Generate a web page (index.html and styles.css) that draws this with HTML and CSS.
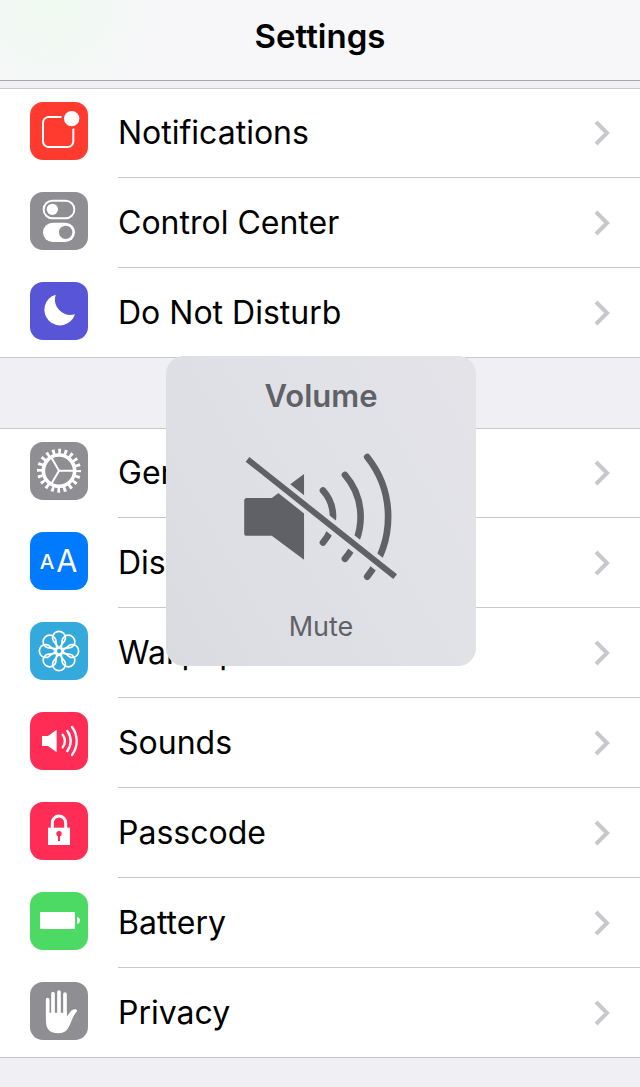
FILE: index.html
```html
<!DOCTYPE html>
<html lang="en">
    <head>
        <meta charset="utf-8">
        <meta name="viewport" content="width=device-width, initial-scale=1">
        <title>Settings</title>
        <link rel="stylesheet" href="styles.css">
    </head>
    <body>
        <svg class="defs" width="0" height="0" aria-hidden="true">
            <symbol id="chevron" viewBox="0 0 18 26">
                <path d="M3 2 L14 13 L3 24" fill="none" stroke="#c7c7cc" stroke-width="4"/>
            </symbol>
        </svg>

        <header class="navbar">
            <h1 class="title">Settings</h1>
        </header>

        <main>
            <ul class="group">
                <li>
                    <a class="row" href="#notifications">
                        <svg class="icon red" viewBox="0 0 174 174" aria-hidden="true">
                            <rect x="39" y="45" width="91" height="90" rx="17" fill="none" stroke="#fff" stroke-width="6"/>
                            <circle cx="125" cy="50" r="31" fill="#ff3b30"/>
                            <circle cx="125" cy="50" r="23" fill="#fff"/>
                        </svg>
                        <span class="label">Notifications</span>
                        <svg class="chevron" aria-hidden="true"><use href="#chevron"/></svg>
                    </a>
                </li>
                <li>
                    <a class="row" href="#control-center">
                        <svg class="icon gray" viewBox="0 0 174 174" aria-hidden="true">
                            <rect x="41" y="26" width="92" height="53" rx="26" fill="none" stroke="#fff" stroke-width="6"/>
                            <circle cx="67" cy="52" r="17" fill="#fff"/>
                            <rect x="39" y="92" width="96" height="58" rx="29" fill="#fff"/>
                            <circle cx="107" cy="121" r="20" fill="#8e8e93"/>
                        </svg>
                        <span class="label">Control Center</span>
                        <svg class="chevron" aria-hidden="true"><use href="#chevron"/></svg>
                    </a>
                </li>
                <li>
                    <a class="row" href="#do-not-disturb">
                        <svg class="icon purple" viewBox="0 0 174 174" aria-hidden="true">
                            <path d="M77 38 A47 47 0 1 0 135 97 A47 47 0 0 1 77 38 Z" fill="#fff"/>
                        </svg>
                        <span class="label">Do Not Disturb</span>
                        <svg class="chevron" aria-hidden="true"><use href="#chevron"/></svg>
                    </a>
                </li>
            </ul>

            <ul class="group">
                <li>
                    <a class="row" href="#general">
                        <svg class="icon gray" viewBox="0 0 174 174" aria-hidden="true">
                            <g fill="none" stroke="#fff">
                                <circle cx="87" cy="86" r="47" stroke-width="11"/>
                                <circle cx="87" cy="86" r="58" stroke-width="16" pathLength="400" stroke-dasharray="9 11" stroke-dashoffset="4"/>
                                <path d="M131 86 H87 L65 48 M87 86 L65 124" stroke-width="6"/>
                            </g>
                        </svg>
                        <span class="label">General</span>
                        <svg class="chevron" aria-hidden="true"><use href="#chevron"/></svg>
                    </a>
                </li>
                <li>
                    <a class="row" href="#display">
                        <svg class="icon blue" viewBox="0 0 174 174" aria-hidden="true">
                            <text class="small-a" x="29" y="111">A</text>
                            <text class="big-a" x="79" y="120">A</text>
                        </svg>
                        <span class="label">Display &amp; Brightness</span>
                        <svg class="chevron" aria-hidden="true"><use href="#chevron"/></svg>
                    </a>
                </li>
                <li>
                    <a class="row" href="#wallpaper">
                        <svg class="icon sky" viewBox="0 0 174 174" aria-hidden="true">
                            <defs>
                                <path id="petal" d="M0 -9 L-17 -31 Q-20 -36 -19 -41 A19 18 0 0 1 19 -41 Q20 -36 17 -31 Z"/>
                            </defs>
                            <g transform="translate(87 87)" fill="none" stroke="#fff" stroke-width="5">
                                <circle r="10"/>
                                <use href="#petal"/>
                                <use href="#petal" transform="rotate(45)"/>
                                <use href="#petal" transform="rotate(90)"/>
                                <use href="#petal" transform="rotate(135)"/>
                                <use href="#petal" transform="rotate(180)"/>
                                <use href="#petal" transform="rotate(225)"/>
                                <use href="#petal" transform="rotate(270)"/>
                                <use href="#petal" transform="rotate(315)"/>
                            </g>
                        </svg>
                        <span class="label">Wallpaper</span>
                        <svg class="chevron" aria-hidden="true"><use href="#chevron"/></svg>
                    </a>
                </li>
                <li>
                    <a class="row" href="#sounds">
                        <svg class="icon pink" viewBox="0 0 174 174" aria-hidden="true">
                            <path d="M36 72 H54 L80 53 V121 L54 102 H36 Z" fill="#fff"/>
                            <g fill="none" stroke="#fff" stroke-width="7" stroke-linecap="round">
                                <path d="M98 68 A33 33 0 0 1 98 106"/>
                                <path d="M112 57 A50 50 0 0 1 112 117"/>
                                <path d="M126 45 A70 70 0 0 1 126 129"/>
                            </g>
                        </svg>
                        <span class="label">Sounds</span>
                        <svg class="chevron" aria-hidden="true"><use href="#chevron"/></svg>
                    </a>
                </li>
                <li>
                    <a class="row" href="#passcode">
                        <svg class="icon pink" viewBox="0 0 174 174" aria-hidden="true">
                            <path d="M67 80 V62 A20 20 0 0 1 107 62 V80" fill="none" stroke="#fff" stroke-width="9"/>
                            <rect x="54" y="77" width="66" height="52" fill="#fff"/>
                            <circle cx="87" cy="95" r="8" fill="#ff2d55"/>
                            <path d="M87 95 V117" stroke="#ff2d55" stroke-width="6"/>
                        </svg>
                        <span class="label">Passcode</span>
                        <svg class="chevron" aria-hidden="true"><use href="#chevron"/></svg>
                    </a>
                </li>
                <li>
                    <a class="row" href="#battery">
                        <svg class="icon green" viewBox="0 0 174 174" aria-hidden="true">
                            <rect x="30" y="60" width="105" height="51" rx="2" fill="#fff"/>
                            <path d="M141 75 Q150 77 150 85 Q150 94 141 96 Z" fill="#fff"/>
                        </svg>
                        <span class="label">Battery</span>
                        <svg class="chevron" aria-hidden="true"><use href="#chevron"/></svg>
                    </a>
                </li>
                <li>
                    <a class="row" href="#privacy">
                        <svg class="icon gray" viewBox="0 0 174 174" aria-hidden="true">
                            <path d="M53 53 V112 M69 35 V112 M87 30 V112 M105 36 V112" stroke="#fff" stroke-width="11" stroke-linecap="round"/>
                            <path d="M48 92 V118 C48 144 62 154 84 154 C104 154 112 146 119 130 C126 112 132 98 141 88 C143 80 130 80 123 87 L110 104 V92 Z" fill="#fff"/>
                        </svg>
                        <span class="label">Privacy</span>
                        <svg class="chevron" aria-hidden="true"><use href="#chevron"/></svg>
                    </a>
                </li>
            </ul>
        </main>

        <div class="hud" role="status">
            <span class="hud-title">Volume</span>
            <svg class="hud-icon" viewBox="243 300 480 400" aria-hidden="true">
                <mask id="slash" maskUnits="userSpaceOnUse" x="240" y="300" width="480" height="400">
                    <rect x="240" y="300" width="480" height="400" fill="#fff"/>
                    <path d="M220 295 L750 716" stroke="#000" stroke-width="43"/>
                </mask>
                <g mask="url(#slash)">
                    <path d="M260 444 H335 L432 372 V630 L335 558 H260 Q252 558 252 550 V452 Q252 444 260 444 Z" fill="#606166"/>
                    <g fill="none" stroke="#606166" stroke-width="20" stroke-linecap="round">
                        <path d="M489 422 A116 116 0 0 1 489 578"/>
                        <path d="M555 375 A192 192 0 0 1 555 627"/>
                        <path d="M622 321 A289 289 0 0 1 622 681"/>
                    </g>
                </g>
                <path d="M262 328 L706 681" stroke="#606166" stroke-width="18"/>
            </svg>
            <span class="hud-state">Mute</span>
        </div>
    </body>
</html>
```
FILE: styles.css
```css
*{
    box-sizing: border-box;
}
body{
    position: relative;
    margin: 0;
    min-height: 100vh;
    background: #efeff4;
    color: #000;
    font-family: Inter, 'Helvetica Neue', 'Liberation Sans', sans-serif;
}
.defs{
    position: absolute;
}
.navbar{
    display: flex;
    justify-content: center;
    padding: 16px 0 24px;
    border-bottom: 1px solid #a7a7ac;
    background: radial-gradient(circle at 50px 0, #effaf1, rgba(247, 247, 249, 0) 110px), #f7f7f9;
}
.title{
    margin: 0;
    font-size: 33px;
    line-height: 40px;
    font-weight: 600;
}
.group{
    margin: 7px 0 70px;
    padding: 0;
    list-style: none;
    background: #fff;
    box-shadow: inset 0 1px #c8c7cc, inset 0 -1px #c8c7cc;
}
.group:last-child{
    margin-bottom: 0;
}
.row{
    display: flex;
    align-items: center;
    height: 90px;
    padding-left: 30px;
    color: inherit;
    text-decoration: none;
    background: linear-gradient(#c8c7cc, #c8c7cc) 118px 100% / 100% 1px no-repeat;
}
.icon{
    flex: none;
    align-self: flex-start;
    width: 58px;
    height: 58px;
    margin: 14px 30px 0 0;
    border-radius: 13px;
}
.label{
    flex: 1;
    font-size: 32px;
    line-height: 40px;
    white-space: nowrap;
}
.chevron{
    flex: none;
    width: 18px;
    height: 26px;
    margin-right: 29px;
}
.red{
    background: #ff3b30;
}
.gray{
    background: #8e8e93;
}
.purple{
    background: #5856d6;
}
.blue{
    background: #007aff;
}
.sky{
    background: #34aadc;
}
.pink{
    background: #ff2d55;
}
.green{
    background: #4cd964;
}
.small-a{
    fill: #fff;
    font-size: 62px;
    font-weight: 500;
}
.big-a{
    fill: #fff;
    font-size: 92px;
    font-weight: 400;
}
/* volume overlay, floats over the list */
.hud{
    position: absolute;
    top: 356px;
    left: calc(50% - 154px);
    display: flex;
    flex-direction: column;
    align-items: center;
    justify-content: space-between;
    width: 310px;
    height: 310px;
    padding: 20px 0 19px;
    border-radius: 18px;
    background: linear-gradient(60deg, #dadbe0, #e0e1e6 50%, #e3e3e8);
    color: #606166;
}
.hud-title{
    font-size: 31px;
    line-height: 40px;
    font-weight: 600;
}
.hud-icon{
    width: 160px;
    height: 133px;
    margin-top: 10px;
}
.hud-state{
    font-size: 27px;
    line-height: 40px;
}
```
